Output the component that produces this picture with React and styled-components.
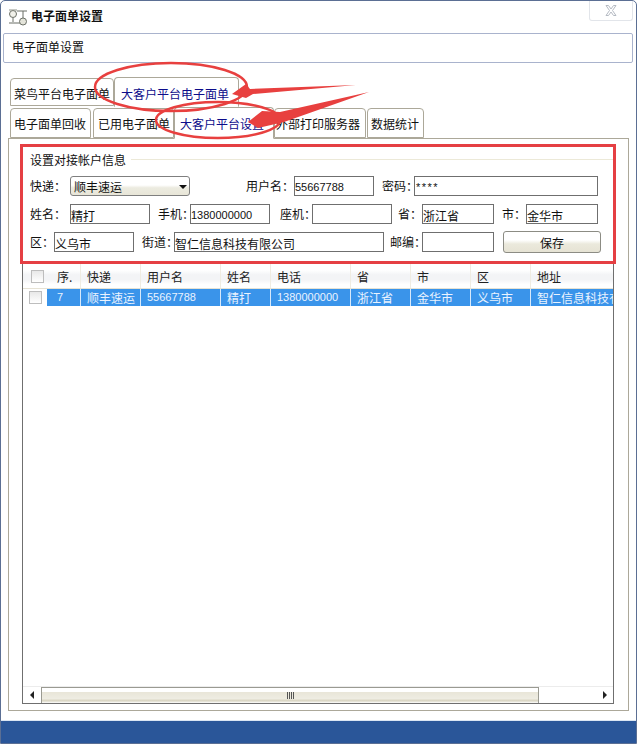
import styled, { createGlobalStyle } from "styled-components";

const Global = createGlobalStyle`
  html, body { margin: 0; padding: 0; background: #fff; }
  body { font-family: "Noto Sans CJK SC", "Liberation Sans", sans-serif; font-size: 12px; color: #111; }
`;

const digits = `font-family: "Liberation Sans", sans-serif; font-size: 11px;`;

const Window = styled.div`
  position: relative;
  box-sizing: border-box;
  width: 637px;
  height: 744px;
  display: flex;
  flex-direction: column;
  background: #fff;
  border: 1px solid #5b6f94;
  border-radius: 5px 5px 0 0;
  overflow: hidden;
`;

const TitleBar = styled.div`
  flex: none;
  height: 32px;
  display: flex;
  align-items: flex-start;
  gap: 3px;
  padding: 7px 3px 0 7px;
  box-sizing: border-box;
`;

const Title = styled.div`
  flex: 1;
  font-size: 12px;
  font-weight: 700;
  line-height: 16px;
`;

const CloseBox = styled.div`
  width: 44px;
  height: 20px;
  margin-top: -7px;
  display: flex;
  align-items: center;
  justify-content: center;
  border: 1px solid #e2e5ea;
  border-top: none;
  border-radius: 0 0 3px 3px;
  box-sizing: border-box;
`;

const HeaderPanel = styled.div`
  flex: none;
  box-sizing: border-box;
  height: 30px;
  margin: 0 3px 0 2px;
  padding: 0 0 2px 8px;
  display: flex;
  align-items: center;
  border: 1px solid #a9b3cd;
  border-radius: 2px;
  line-height: 16px;
`;

const TabRow = styled.div`
  flex: none;
  display: flex;
  align-items: flex-end;
  height: ${(p) => p.$height}px;
  margin-top: ${(p) => p.$top}px;
  padding-left: 9px;
  position: relative;
  z-index: 1;
`;

const Tab = styled.div`
  box-sizing: border-box;
  width: ${(p) => p.$width}px;
  height: ${(p) => (p.$active ? p.$tall : p.$tall - 2)}px;
  margin-left: ${(p) => p.$gap || 0}px;
  padding: ${(p) => p.$down || 0}px 0 0 ${(p) => p.$pad ?? 3}px;
  display: flex;
  align-items: center;
  white-space: nowrap;
  background: #fff;
  color: ${(p) => (p.$active ? "#0c0c8a" : "#111")};
  border: 1px solid #aca899;
  border-bottom: ${(p) => (p.$active ? "1px solid #fff" : "1px solid #aca899")};
  border-radius: 4px 4px 0 0;
  margin-bottom: ${(p) => (p.$active ? -1 : 0)}px;
`;

const TabPanel = styled.div`
  flex: none;
  box-sizing: border-box;
  width: 621px;
  height: 573px;
  margin-left: 7px;
  padding: 5px 12px 7px 11px;
  border: 1px solid #aca899;
  display: flex;
  flex-direction: column;
`;

const FormBox = styled.div`
  flex: none;
  box-sizing: border-box;
  width: 596px;
  height: 120px;
  display: flex;
  flex-direction: column;
  border: 3px solid #e53f43;
  margin-right: -3px;
  padding: 4px 0 0 7px;
  position: relative;
  z-index: 1;
`;

const Legend = styled.div`
  display: flex;
  align-items: center;
  gap: 5px;
  height: 16px;
  margin: 0 0 9px -7px;
  padding-left: 7px;
  &::after {
    content: "";
    flex: 1;
    height: 1px;
    background: #ece9d8;
  }
`;

const FormRow = styled.div`
  display: flex;
  align-items: center;
  height: 20px;
  margin-bottom: 8px;
`;

const Label = styled.span`
  width: ${(p) => p.$width}px;
  margin-left: ${(p) => p.$left || 0}px;
  flex: none;
  white-space: nowrap;
  margin-top: -1px;
`;

const Input = styled.div`
  box-sizing: border-box;
  flex: none;
  width: ${(p) => p.$width}px;
  height: 20px;
  border: 1px solid #6f6f6f;
  background: #fff;
  padding: 2px 0 0 ${(p) => p.$pad ?? 0}px;
  line-height: 17px;
  letter-spacing: ${(p) => p.$spacing || 0}px;
  white-space: nowrap;
  overflow: hidden;
  ${(p) => p.$digits && digits}
`;

const Select = styled.div`
  box-sizing: border-box;
  flex: none;
  width: 120px;
  height: 20px;
  border: 1px solid #7f7f7f;
  border-radius: 3px;
  padding: 1px 0 0 3px;
  display: flex;
  align-items: center;
  justify-content: space-between;
  background: linear-gradient(#fff 0%, #fff 45%, #ecebe0 60%, #e8e6d8 100%);
`;

const Caret = styled.span`
  width: 0;
  height: 0;
  margin-right: 2px;
  border-left: 4px solid transparent;
  border-right: 4px solid transparent;
  border-top: 4px solid #111;
`;

const SaveButton = styled.button`
  box-sizing: border-box;
  flex: none;
  width: 98px;
  height: 22px;
  margin: 0 0 0 9px;
  padding: 0;
  font: inherit;
  color: #111;
  border: 1px solid #8c8c84;
  border-radius: 3px;
  background: linear-gradient(#fff 0%, #fff 40%, #ebe9dc 60%, #e6e3d4 100%);
`;

const Grid = styled.div`
  flex: none;
  box-sizing: border-box;
  position: relative;
  width: 592px;
  height: 440px;
  margin-left: 2px;
  display: flex;
  flex-direction: column;
  border: 1px solid #6f6f6f;
  border-top: none;
`;

const GridHeader = styled.div`
  flex: none;
  display: flex;
  height: 25px;
  box-sizing: border-box;
  border-bottom: 1px solid #e6e2d4;
  background: linear-gradient(#fff 0%, #fff 25%, #f3f4f6 45%, #f3f4f6 65%, #fff 85%);
`;

const GridRow = styled.div`
  flex: none;
  display: flex;
  height: 17px;
`;

const CheckCell = styled.div`
  flex: none;
  width: ${(p) => p.$width}px;
  display: flex;
  align-items: center;
  justify-content: flex-start;
`;

const Box = styled.span`
  display: block;
  box-sizing: border-box;
  width: 13px;
  height: 13px;
  margin-left: ${(p) => p.$left}px;
  border: 1px solid #bdbdbd;
  background: linear-gradient(#e8e8e8, #fff);
`;

const Cell = styled.div`
  flex: none;
  box-sizing: border-box;
  width: ${(p) => p.$width}px;
  padding-left: ${(p) => p.$pad ?? 6}px;
  white-space: nowrap;
  overflow: hidden;
  line-height: 17px;
  color: ${(p) => (p.$selected ? "#eaf3ff" : "#222")};
  background: ${(p) => (p.$selected ? "#3a94ea" : "transparent")};
  border-right: 1px solid ${(p) => (p.$selected ? "#d7e9fb" : "#efece2")};
  ${(p) => p.$digits && digits}
  &:last-child { border-right: none; flex: 1; }
`;

const HeadCell = styled(Cell)`
  padding-top: 4px;
`;

const GridBody = styled.div`
  flex: 1;
`;

const ScrollBar = styled.div`
  flex: none;
  height: 16px;
  display: flex;
  align-items: center;
  border-top: 1px solid #ececec;
`;

const ScrollArrow = styled.div`
  flex: none;
  width: ${(p) => p.$width}px;
  display: flex;
  justify-content: center;
`;

const ScrollThumb = styled.div`
  flex: none;
  box-sizing: border-box;
  width: 498px;
  height: 16px;
  margin-top: -1px;
  display: flex;
  align-items: center;
  justify-content: center;
  gap: 1px;
  border: 1px solid #9a9a92;
  border-width: 1px 1px 0 1px;
  background: linear-gradient(#fff 0%, #fff 25%, #e9e6d9 30%, #eeece2 70%, #d9d5c2 85%, #fff 100%);
`;

const Grip = styled.span`
  width: 1px;
  height: 7px;
  background: #555;
`;

const ScrollTrack = styled.div`
  flex: 1;
`;

const Footer = styled.div`
  flex: none;
  margin: 9px -1px 0;
  height: 24px;
  background: #2a5699;
  border-top: 1px solid #dbe6f3;
  box-shadow: inset 0 -1px 0 #5f86bd;
`;

const Annotation = styled.svg`
  position: absolute;
  left: -1px;
  top: -1px;
  pointer-events: none;
  z-index: 5;
`;

const headers = [
  { name: "序.", width: 30 },
  { name: "快递", width: 60 },
  { name: "用户名", width: 80 },
  { name: "姓名", width: 50 },
  { name: "电话", width: 80 },
  { name: "省", width: 60 },
  { name: "市", width: 60 },
  { name: "区", width: 60 },
  { name: "地址", width: 82 },
];

const row = [
  { text: "7", width: 34, pad: 10, digits: true },
  { text: "顺丰速运", width: 60 },
  { text: "55667788", width: 80, digits: true },
  { text: "精打", width: 50 },
  { text: "1380000000", width: 80, digits: true },
  { text: "浙江省", width: 60 },
  { text: "金华市", width: 60 },
  { text: "义乌市", width: 60 },
  { text: "智仁信息科技有限公司", width: 82 },
];

const WindowIcon = () => (
  <svg width="20" height="18" viewBox="0 0 20 18" fill="none" stroke="#6b6f66" strokeWidth="1">
    <circle cx="5" cy="6" r="3.500" fill="#f1f1ea" />
    <path d="M5 10v4M1 15h12M9 3h10M15 3v7" />
    <circle cx="15" cy="13.500" r="3.500" fill="#e4e4da" />
    <path d="M1 2h8" stroke="#8f938a" />
  </svg>
);

export default function App() {
  return (
    <>
      <Global />
      <Window>
        <TitleBar>
          <WindowIcon />
          <Title>电子面单设置</Title>
          <CloseBox>
            <svg width="12" height="11" viewBox="0 0 12 11" fill="none" stroke="#b4bac2" strokeWidth="1">
              <path d="M1 0.500h2.500L6 4l2.500-3.500H11L7.500 5.500 11 10.500H8.500L6 7l-2.500 3.500H1l3.500-5z" />
            </svg>
          </CloseBox>
        </TitleBar>
        <HeaderPanel>电子面单设置</HeaderPanel>

        <TabRow $height={30} $top={13}>
          <Tab $width={104} $tall={30} $down={2}>菜鸟平台电子面单</Tab>
          <Tab $width={125} $tall={30} $down={2} $active $pad={6}>大客户平台电子面单</Tab>
        </TabRow>
        <TabRow $height={30} $top={2}>
          <Tab $width={81} $tall={32}>电子面单回收</Tab>
          <Tab $width={81} $tall={32} $gap={2} $pad={4}>已用电子面单</Tab>
          <Tab $width={100} $tall={32} $active $pad={5}>大客户平台设置</Tab>
          <Tab $width={92} $tall={32} $pad={1}>外部打印服务器</Tab>
          <Tab $width={57} $tall={32} $gap={1} $pad={3}>数据统计</Tab>
        </TabRow>

        <TabPanel>
          <FormBox>
            <Legend>设置对接帐户信息</Legend>
            <FormRow>
              <Label $width={40}>快递：</Label>
              <Select>
                顺丰速运
                <Caret />
              </Select>
              <Label $width={48} $left={56}>用户名：</Label>
              <Input $width={80} $digits>55667788</Input>
              <Label $width={32} $left={8}>密码：</Label>
              <Input $width={184} $pad={1} $digits $spacing={1.5}>****</Input>
            </FormRow>
            <FormRow>
              <Label $width={40}>姓名：</Label>
              <Input $width={80}>精打</Input>
              <Label $width={32} $left={8}>手机：</Label>
              <Input $width={80} $digits>1380000000</Input>
              <Label $width={32} $left={10}>座机：</Label>
              <Input $width={80} />
              <Label $width={24} $left={6}>省：</Label>
              <Input $width={72}>浙江省</Input>
              <Label $width={24} $left={8}>市：</Label>
              <Input $width={72}>金华市</Input>
            </FormRow>
            <FormRow>
              <Label $width={24}>区：</Label>
              <Input $width={80}>义乌市</Input>
              <Label $width={32} $left={8}>街道：</Label>
              <Input $width={210}>智仁信息科技有限公司</Input>
              <Label $width={32} $left={6}>邮编：</Label>
              <Input $width={72} />
              <SaveButton>保存</SaveButton>
            </FormRow>
          </FormBox>

          <Grid>
            <GridHeader>
              <CheckCell $width={28}><Box $left={8} /></CheckCell>
              {headers.map((c) => (
                <HeadCell key={c.name} $width={c.width}>{c.name}</HeadCell>
              ))}
            </GridHeader>
            <GridRow>
              <CheckCell $width={24}><Box $left={6} /></CheckCell>
              {row.map((c) => (
                <Cell key={c.text} $width={c.width} $pad={c.pad} $digits={c.digits} $selected>{c.text}</Cell>
              ))}
            </GridRow>
            <GridBody />
            <ScrollBar>
              <ScrollArrow $width={18}>
                <svg width="5" height="8" viewBox="0 0 5 8"><path d="M4 0v8L0 4z" fill="#222" /></svg>
              </ScrollArrow>
              <ScrollThumb><Grip /><Grip /><Grip /><Grip /></ScrollThumb>
              <ScrollTrack />
              <ScrollArrow $width={18}>
                <svg width="5" height="8" viewBox="0 0 5 8"><path d="M1 0v8l4-4z" fill="#222" /></svg>
              </ScrollArrow>
            </ScrollBar>
          </Grid>
        </TabPanel>
        <Footer />

        <Annotation width="637" height="744" viewBox="0 0 637 744">
          <g fill="none" stroke="#e8403f" strokeWidth="2.500">
            <ellipse cx="171" cy="87" rx="76" ry="24" />
            <ellipse cx="218" cy="120" rx="62" ry="18" />
          </g>
          <g fill="#e8403f">
            <path d="M232 94L246 84L250 89L356 85L253 94L246 98Z" />
            <path d="M248 122L262 111L280 112L369 92L284 122L258 128Z" />
          </g>
        </Annotation>
      </Window>
    </>
  );
}
